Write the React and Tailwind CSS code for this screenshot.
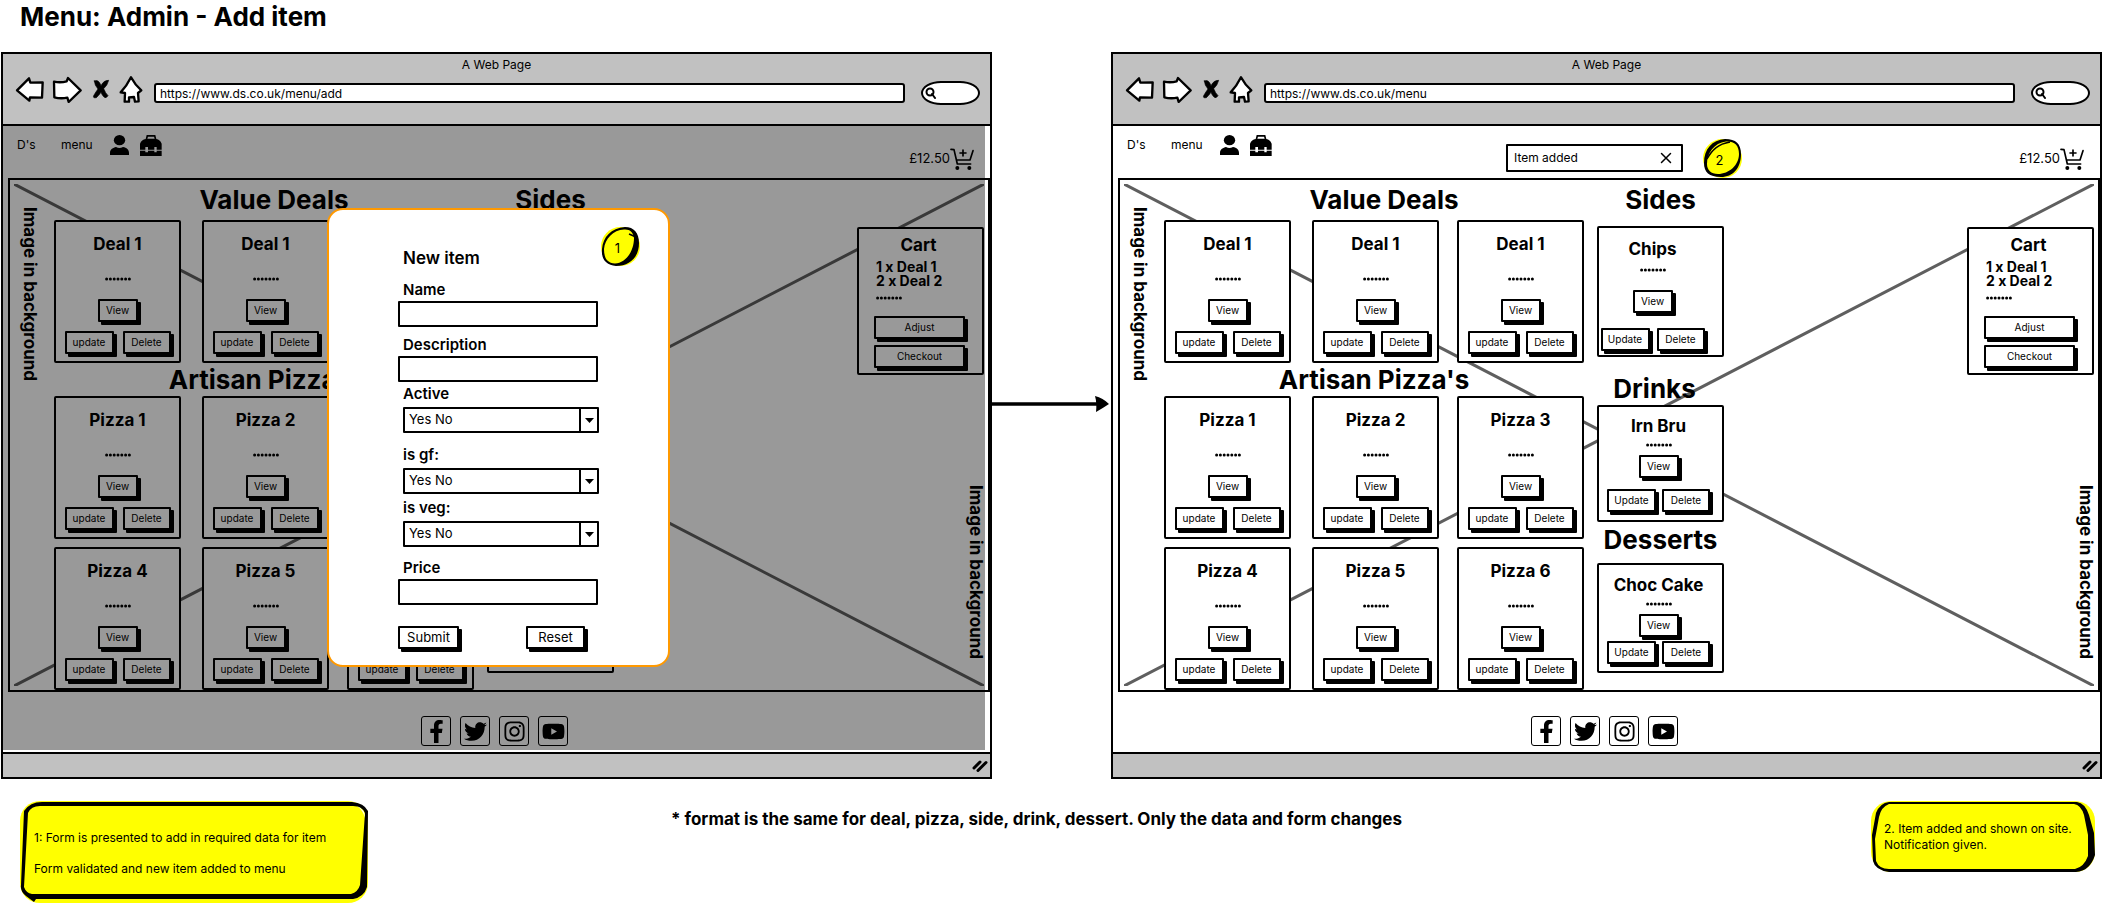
import { FaFacebookF, FaInstagram, FaTwitter, FaYoutube } from "react-icons/fa";

function SketchButton({ className = "", children, type = "button" }) {
  return (
    <button
      type={type}
      className={`flex items-center justify-center rounded-[1px] border-2 border-black bg-white shadow-[3px_3px_0_#000] ${className}`}
    >
      {children}
    </button>
  );
}

function Dots({ className = "" }) {
  return (
    <svg className={`block h-2 w-[26px] ${className}`} viewBox="0 0 26 8" aria-hidden="true">
      {[0, 1, 2, 3, 4, 5, 6].map((i) => (
        <circle key={i} cx={1.6 + i * 3.8} cy="4" r="1.5" />
      ))}
    </svg>
  );
}

function ItemCard({ name, update = "update", className, dots, view, row, gap = "gap-[9px]" }) {
  return (
    <article
      className={`flex w-[127px] flex-col items-center rounded-[2px] border-2 border-black bg-white ${className}`}
    >
      <h3 className="text-[17px] leading-7 font-bold">{name}</h3>
      <Dots className={dots} />
      <SketchButton className={`h-[23px] w-10 text-[10px] ${view}`}>View</SketchButton>
      <div className={`flex ${gap} ${row}`}>
        <SketchButton className="h-[23px] w-[49px] text-[10px]">{update}</SketchButton>
        <SketchButton className="h-[23px] w-12 text-[10px]">Delete</SketchButton>
      </div>
    </article>
  );
}

function MenuCard({ name }) {
  return <ItemCard name={name} className="h-[143px] pt-2" dots="mt-[17px]" view="mt-4" row="mt-[9px]" />;
}

function BackgroundLabel({ className }) {
  return (
    <p className={`text-[17px] leading-6 font-bold whitespace-nowrap [writing-mode:vertical-rl] ${className}`}>
      Image in background
    </p>
  );
}

function Cart() {
  return (
    <aside className="mr-1 flex h-[148px] w-[127px] flex-col rounded-[2px] border-2 border-black bg-white pt-[2px]">
      <h3 className="pr-1 text-center text-[17px] leading-7 font-bold">Cart</h3>
      <ul className="mt-px pl-[17px] text-[14px] leading-[14px] font-bold">
        <li>1 x Deal 1</li>
        <li>2 x Deal 2</li>
      </ul>
      <Dots className="mt-[6px] ml-[17px]" />
      <div className="mt-[14px] ml-[15px] flex flex-col gap-[6px]">
        <SketchButton className="h-[23px] w-[91px] text-[10px]">Adjust</SketchButton>
        <SketchButton className="h-[23px] w-[91px] text-[10px]">Checkout</SketchButton>
      </div>
    </aside>
  );
}

function MenuArea() {
  return (
    <main className="relative ml-[5px] flex h-[514px] border-2 border-black">
      <svg
        className="absolute inset-1 h-[502px] w-[calc(100%-8px)]"
        viewBox="0 0 100 100"
        preserveAspectRatio="none"
        aria-hidden="true"
      >
        <path
          d="M0 0 L100 100 M0 100 L100 0"
          stroke="#5f5f5f"
          strokeWidth="3"
          vectorEffect="non-scaling-stroke"
        />
      </svg>
      <div className="relative flex min-w-0 flex-1 items-start">
        <BackgroundLabel className="mt-[27px] ml-2" />
        <div className="ml-3">
          <h2 className="mt-[2px] pl-5 text-center text-[26px] leading-9 font-bold">Value Deals</h2>
          <div className="mt-[2px] grid grid-cols-[148px_145px_127px]">
            <MenuCard name="Deal 1" />
            <MenuCard name="Deal 1" />
            <MenuCard name="Deal 1" />
          </div>
          <h2 className="text-center text-[26px] leading-[33px] font-bold">Artisan Pizza's</h2>
          <div className="grid grid-cols-[148px_145px_127px] gap-y-2">
            <MenuCard name="Pizza 1" />
            <MenuCard name="Pizza 2" />
            <MenuCard name="Pizza 3" />
            <MenuCard name="Pizza 4" />
            <MenuCard name="Pizza 5" />
            <MenuCard name="Pizza 6" />
          </div>
        </div>
        <div className="ml-[13px] w-[127px]">
          <h2 className="mt-[2px] text-center text-[26px] leading-9 font-bold">Sides</h2>
          <ItemCard
            name="Chips"
            update="Update"
            className="mt-2 h-[131px] pt-[7px] pr-4"
            dots="mt-[3px]"
            view="mt-4"
            row="mt-[15px]"
            gap="gap-[7px]"
          />
          <h2 className="mt-4 pr-3 text-center text-[26px] leading-8 font-bold">Drinks</h2>
          <ItemCard
            name="Irn Bru"
            update="Update"
            className="h-[117px] pt-[5px] pr-1"
            dots="mt-px"
            view="mt-[6px]"
            row="mt-[11px]"
            gap="gap-[6px]"
          />
          <h2 className="mt-[2px] text-center text-[26px] leading-8 font-bold">Desserts</h2>
          <ItemCard
            name="Choc Cake"
            update="Update"
            className="mt-[7px] h-[110px] pt-[6px] pr-1"
            dots="mt-px"
            view="mt-[6px]"
            row="mt-1"
            gap="gap-[6px]"
          />
        </div>
        <div className="ml-auto flex flex-col items-end pt-[47px]">
          <Cart />
          <BackgroundLabel className="mt-[110px]" />
        </div>
      </div>
    </main>
  );
}

function ToolbarIcon({ children, label, className, viewBox }) {
  return (
    <button type="button" aria-label={label} className="shrink-0">
      <svg
        className={className}
        viewBox={viewBox}
        fill="#fff"
        stroke="#000"
        strokeWidth="7"
        strokeLinejoin="round"
        strokeLinecap="round"
      >
        {children}
      </svg>
    </button>
  );
}

function Chrome({ url, id }) {
  return (
    <header className="h-[72px] border-b-2 border-black bg-[#c1c1c1]">
      <p className="pt-px text-center text-[12px] leading-5">A Web Page</p>
      <div className="flex items-center pr-[10px] pl-3">
        <div className="flex items-center pb-2">
          <ToolbarIcon label="Back" className="h-7 w-[30px]" viewBox="0 0 90 84">
            <path d="M6 46 L42 10 L46 23 L83 22 L81 68 L45 67 L43 77 Z" />
          </ToolbarIcon>
          <span className="w-[7px]" />
          <ToolbarIcon label="Forward" className="h-7 w-[30px]" viewBox="0 0 90 84">
            <path d="M6 20 Q26 24 44 19 L48 9 L86 46 L50 81 L46 68 Q26 72 7 67 Z" />
          </ToolbarIcon>
          <span className="w-[10px]" />
          <ToolbarIcon label="Stop" className="h-7 w-5" viewBox="0 0 60 84">
            <path
              d="M7 18 Q20 12 27 32 Q35 16 50 16 Q46 32 35 41 Q40 54 48 62 Q42 72 36 66 Q30 60 27 52 Q20 62 13 68 Q2 70 5 62 Q12 50 18 42 Q8 32 7 18 Z"
              fill="#000"
              strokeWidth="2"
            />
          </ToolbarIcon>
          <span className="w-[7px]" />
          <ToolbarIcon label="Home" className="h-7 w-6" viewBox="0 0 72 84">
            <path d="M36 7 Q48 30 67 46 L57 54 L59 79 L48 80 L45 66 L30 67 L30 80 L17 80 L18 54 L5 52 Q24 32 36 7 Z" />
          </ToolbarIcon>
        </div>
        <input
          id={id}
          aria-label="Address"
          defaultValue={url}
          className="ml-[11px] h-5 min-w-0 flex-1 rounded-[3px] border-2 border-black bg-white px-1 text-[12px] outline-none"
        />
        <label className="ml-4 flex h-6 w-[59px] items-center rounded-[20px/12px] border-2 border-black bg-white pl-[2px]">
          <svg className="h-3 w-3 shrink-0" viewBox="0 0 12 12" fill="none" stroke="#000" strokeWidth="2">
            <circle cx="5" cy="5" r="3.5" />
            <path d="M7 7 L10 11" strokeLinecap="round" />
          </svg>
          <input aria-label="Search" className="w-8 min-w-0 bg-transparent outline-none" />
        </label>
      </div>
    </header>
  );
}

function Badge({ n, flip = false }) {
  return (
    <span className="relative flex h-[39px] w-[39px] items-center justify-center">
      <svg className="absolute inset-0 h-full w-full" viewBox="0 0 39 39" aria-hidden="true">
        <circle cx="19.5" cy="19.5" r="19.5" fill="#ff0" />
        {flip ? (
          <>
            <path
              fillRule="evenodd"
              d="M1 24 C1 10 9 1 22 0 C33 0 38 5 38 15 C38 29 30 38 18 38 C6 38 1 33 1 24 Z M4 25 C4 31 8 35 15 35 C26 35 36 26 36 15 C36 6 31 2 23 2.500 C11 4 4 14 4 25 Z"
            />
            <path d="M4 20 C9 11 15 5 27 3" fill="none" stroke="#000" strokeWidth="1.500" />
          </>
        ) : (
          <>
            <path
              fillRule="evenodd"
              d="M1 22 C2 10 10 1 24 0 C33 0 38 6 38 16 C38 30 29 39 15 39 C5 38 0 32 1 22 Z M3 22 C3 31 6 36 14 36.500 C25 36 33 24 33 11 C32 5 29 2 23 2.500 C12 3 4 12 3 22 Z"
            />
            <path d="M28 7 L35 10" stroke="#000" strokeWidth="1.500" />
          </>
        )}
      </svg>
      <span className="relative pr-[6px] pt-[2px] text-[13px] leading-5">{n}</span>
    </span>
  );
}

function Toast() {
  return (
    <div className="ml-[234px] flex items-start">
      <div className="mt-[9px] flex h-7 w-[177px] items-center justify-between rounded-[1px] border-2 border-black bg-white pr-[9px] pl-[6px] text-[12px]">
        <span>Item added</span>
        <button type="button" aria-label="Dismiss">
          <svg className="h-3 w-3" viewBox="0 0 12 12" stroke="#000" strokeWidth="1.500" strokeLinecap="round">
            <path d="M1.500 1.500 L10.500 10.500 M10.500 1.500 L1.500 10.500" />
          </svg>
        </button>
      </div>
      <div className="mt-1 ml-5">
        <Badge n={2} flip />
      </div>
    </div>
  );
}

function SiteNav({ toast }) {
  return (
    <nav className="flex h-[52px] items-start pt-[9px] pr-4 pl-[14px] text-[12px]">
      <a href="#home" className="w-11 leading-5">D's</a>
      <a href="#menu" className="w-[33px] leading-5">menu</a>
      <a href="#account" aria-label="Account" className="ml-4">
        <svg className="h-5 w-[19px]" viewBox="0 0 57 60">
          <ellipse cx="28.500" cy="15.500" rx="17" ry="15.500" />
          <path d="M0 60 V54 C0 42 10 38 18 36 Q28 42 39 36 C50 38 57 44 57 54 V60 Z" />
        </svg>
      </a>
      <a href="#admin" aria-label="Admin tools" className="ml-[11px]">
        <svg className="h-[21px] w-[22px]" viewBox="0 0 66 63">
          <path
            fillRule="evenodd"
            d="M17 12 L20 0 H46 L49 12 Q60 14 65 26 V44 H50 V36 H43 V44 H24 V36 H16 V44 H0 V26 Q5 14 17 12 Z M22 11 H44 L42 5 H24 Z"
          />
          <path d="M0 47 H16 V52 H24 V47 H43 V52 H50 V47 H65 V63 H0 Z" />
        </svg>
      </a>
      {toast && <Toast />}
      <a href="#cart" className="mt-[13px] ml-auto flex items-start">
        <span className="text-[13px] leading-5">£12.50</span>
        <svg
          className="h-[22px] w-6"
          viewBox="0 0 72 66"
          fill="none"
          stroke="#000"
          strokeWidth="5"
          strokeLinecap="round"
          strokeLinejoin="round"
        >
          <path d="M3 4 L12 5 L22 48 H62 M20 36 H60 L69 8 M39 6 V24 M30 15 H48" />
          <circle cx="22" cy="60" r="3.500" fill="#000" />
          <circle cx="58" cy="60" r="3.500" fill="#000" />
        </svg>
      </a>
    </nav>
  );
}

const socials = [
  ["Facebook", FaFacebookF],
  ["Twitter", FaTwitter],
  ["Instagram", FaInstagram],
  ["YouTube", FaYoutube],
];

function SiteFooter() {
  return (
    <footer className="flex h-[60px] justify-center gap-[9px] pt-6 pr-1">
      {socials.map(([name, Icon]) => (
        <a
          key={name}
          href={`#${name}`}
          aria-label={name}
          className="flex h-[30px] w-[30px] items-center justify-center rounded-[3px] border border-black"
        >
          <Icon className="h-[23px] w-[23px]" />
        </a>
      ))}
    </footer>
  );
}

function BrowserWindow({ url, id, toast, children }) {
  return (
    <section className="min-w-0 flex-1 border-2 border-black bg-white">
      <Chrome url={url} id={id} />
      <div className="relative">
        <SiteNav toast={toast} />
        <MenuArea />
        <SiteFooter />
        {children}
      </div>
      <div className="flex h-[25px] items-center justify-end border-t-2 border-black bg-[#c1c1c1] pr-[2px]">
        <svg className="h-3 w-4" viewBox="0 0 16 12" stroke="#000" strokeWidth="3" strokeLinecap="round">
          <path d="M2 8 L8 2 M6 10.500 L14 2.500" />
        </svg>
      </div>
    </section>
  );
}

function TextField({ id, label, className = "" }) {
  return (
    <div className={`flex flex-col ${className}`}>
      <label htmlFor={id} className="pl-[5px] text-[15px] leading-5 font-semibold">
        {label}
      </label>
      <input id={id} className="mt-px h-[26px] w-[200px] rounded-[1px] border-2 border-black bg-white px-1 text-[13px]" />
    </div>
  );
}

function SelectField({ id, label, className = "" }) {
  return (
    <div className={`flex flex-col pl-[5px] ${className}`}>
      <label htmlFor={id} className="text-[15px] leading-5 font-semibold">
        {label}
      </label>
      <div className="mt-[3px] flex h-[26px] w-[196px] rounded-[1px] border-2 border-black">
        <select id={id} className="min-w-0 flex-1 appearance-none bg-white pl-1 text-[13px] outline-none">
          <option>Yes No</option>
        </select>
        <span className="flex w-[18px] items-center justify-center border-l-2 border-black">
          <svg className="h-[5px] w-[9px]" viewBox="0 0 9 5">
            <path d="M0 0 H9 L4.500 5 Z" />
          </svg>
        </span>
      </div>
    </div>
  );
}

function NewItemDialog() {
  return (
    <div
      role="dialog"
      aria-label="New item"
      className="absolute top-[82px] left-[324px] h-[459px] w-[343px] rounded-[16px] border-2 border-[#ff9900] bg-white"
    >
      <div className="absolute top-[17px] right-[28px]">
        <Badge n={1} />
      </div>
      <form className="flex flex-col pt-9 pl-[69px]">
        <h2 className="pl-[5px] text-[17px] leading-6 font-semibold">New item</h2>
        <TextField id="name" label="Name" className="mt-[10px]" />
        <TextField id="description" label="Description" className="mt-2" />
        <SelectField id="active" label="Active" className="mt-[2px]" />
        <SelectField id="gf" label="is gf:" className="mt-3" />
        <SelectField id="veg" label="is veg:" className="mt-1" />
        <TextField id="price" label="Price" className="mt-[11px]" />
        <div className="mt-[21px] flex gap-[67px]">
          <SketchButton className="h-[23px] w-[61px] text-[13px]" type="submit">Submit</SketchButton>
          <SketchButton className="h-[23px] w-[59px] text-[13px]" type="reset">Reset</SketchButton>
        </div>
      </form>
    </div>
  );
}

export default function App() {
  return (
    <div className="min-h-screen bg-white font-['Inter',sans-serif] text-black">
      <h1 className="h-[52px] pt-px pl-5 text-[26px] leading-8 font-bold">Menu: Admin - Add item</h1>

      <div className="flex px-px">
        <BrowserWindow url="https://www.ds.co.uk/menu/add" id="url-add">
          <div className="absolute top-0 right-[5px] bottom-[2px] left-0 bg-black/40" />
          <NewItemDialog />
        </BrowserWindow>
        <svg className="mt-[343px] h-[18px] w-[119px] shrink-0" viewBox="0 0 119 18" aria-hidden="true">
          <path d="M0 9 H106" stroke="#000" strokeWidth="3.500" />
          <path d="M103 1 Q111 3 117 9 Q111 13 104 17 Q105 8 103 1 Z" />
        </svg>
        <BrowserWindow url="https://www.ds.co.uk/menu" id="url-menu" toast />
      </div>

      <div className="flex items-start pt-[22px] pr-2 pl-5">
        <div className="relative h-[102px] w-[348px]">
          <svg
            className="absolute inset-0 h-full w-full"
            viewBox="0 0 348 102"
            preserveAspectRatio="none"
            aria-hidden="true"
          >
            <rect width="348" height="102" rx="20" fill="#ff0" />
            <path
              fillRule="evenodd"
              d="M4 10 Q10 1 22 1 H332 Q344 2 348 10 L347 86 Q344 96 333 98 L16 98 L14 101 L6 95 Q0 90 1 84 Z M8 12 L4 86 Q6 92 12 93 H331 Q338 91 340 84 L345 12 Q342 5 333 5 H20 Q11 5 8 12 Z"
            />
            <path d="M337 5 Q345 8 345 17 Q343 9 337 5 Z" fill="#fff" />
          </svg>
          <p className="relative pt-[27px] pl-[14px] text-[12px] leading-5">
            1: Form is presented to add in required data for item
          </p>
          <p className="relative pt-[11px] pl-[14px] text-[12px] leading-5">Form validated and new item added to menu</p>
        </div>
        <p className="mt-[6px] ml-[303px] text-[17px] leading-6 font-bold">
          * format is the same for deal, pizza, side, drink, dessert. Only the data and form changes
        </p>
        <div className="relative ml-auto h-[71px] w-[224px]">
          <svg
            className="absolute inset-0 h-full w-full"
            viewBox="0 0 224 71"
            preserveAspectRatio="none"
            aria-hidden="true"
          >
            <rect width="224" height="71" rx="20" fill="#ff0" />
            <path
              fillRule="evenodd"
              d="M18 1 H206 Q214 2 218 14 L223 32 L224 54 Q219 70 205 71 L18 71 Q4 69 2 60 L1 34 L5 12 Q9 2 18 1 Z M18 3 Q10 6 8 16 L4 38 L5 60 Q8 68 18 68 H204 Q213 66 217 55 L217 34 L213 14 Q210 4 203 3 Z"
            />
          </svg>
          <p className="relative pt-5 pl-[13px] text-[12px] leading-4">
            2. Item added and shown on site.
            <br />
            Notification given.
          </p>
        </div>
      </div>
    </div>
  );
}
